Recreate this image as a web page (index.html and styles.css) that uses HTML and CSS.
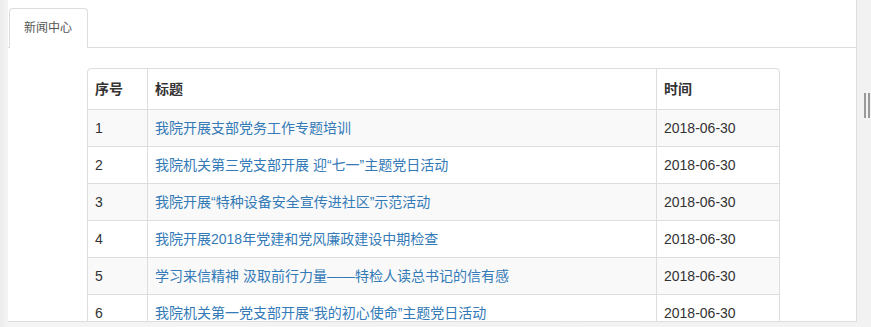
FILE: index.html
```html
<!DOCTYPE html>
<html lang="zh">
<head>
<meta charset="utf-8">
<link rel="stylesheet" href="styles.css">
</head>
<body>
<div class="page">
  <div class="panel">
    <div class="tabs">
      <div class="tab">新闻中心</div>
    </div>
    <div class="content">
      <div class="table-wrap">
        <table class="news">
          <thead>
            <tr><th class="c-no">序号</th><th class="c-title">标题</th><th class="c-time">时间</th></tr>
          </thead>
          <tbody>
            <tr><td>1</td><td><a>我院开展支部党务工作专题培训</a></td><td>2018-06-30</td></tr>
            <tr><td>2</td><td><a>我院机关第三党支部开展 迎“七一”主题党日活动</a></td><td>2018-06-30</td></tr>
            <tr><td>3</td><td><a>我院开展“特种设备安全宣传进社区”示范活动</a></td><td>2018-06-30</td></tr>
            <tr><td>4</td><td><a>我院开展2018年党建和党风廉政建设中期检查</a></td><td>2018-06-30</td></tr>
            <tr><td>5</td><td><a>学习来信精神 汲取前行力量——特检人读总书记的信有感</a></td><td>2018-06-30</td></tr>
            <tr><td>6</td><td><a>我院机关第一党支部开展“我的初心使命”主题党日活动</a></td><td>2018-06-30</td></tr>
          </tbody>
        </table>
      </div>
    </div>
  </div>
  <div class="side">
    <div class="grip"><span></span><span></span></div>
  </div>
</div>
</body>
</html>
```
FILE: styles.css
```css
html, body {
  margin: 0;
  padding: 0;
  background: #f2f2f2;
  overflow: hidden;
}
body {
  font-family: "Liberation Sans", Arial, "Noto Sans CJK SC", sans-serif;
  font-size: 14px;
  color: #333;
}
.page {
  display: flex;
  height: 327px;
  padding-left: 8px;
  background: linear-gradient(to right, #ececec 0, #f4f4f4 8px, #f2f2f2 100%);
}
.panel {
  width: 849px;
  height: 322px;
  background: #fff;
  border-right: 1px solid #dedede;
  border-bottom: 1px solid #dedede;
  box-sizing: border-box;
  overflow: hidden;
  flex: none;
}
.tabs {
  height: 39px;
  padding-top: 8px;
  padding-left: 1px;
  border-bottom: 1px solid #ddd;
  display: flex;
  align-items: flex-end;
}
.tab {
  width: 79px;
  height: 40px;
  box-sizing: border-box;
  border: 1px solid #ddd;
  border-bottom: none;
  border-radius: 4px 4px 0 0;
  background: #fff;
  margin-bottom: -1px;
  padding-left: 14px;
  line-height: 38px;
  color: #555;
  font-size: 12px;
}
.content {
  padding: 20px 0 0 79px;
}
.table-wrap {
  width: 693px;
  border: 1px solid #ddd;
  border-radius: 4px;
  overflow: hidden;
  box-sizing: border-box;
}
.news {
  width: 100%;
  border-collapse: collapse;
}
.news th, .news td {
  text-align: left;
  padding: 8px 7px;
  line-height: 20px;
  border-left: 1px solid #ddd;
  border-top: 1px solid #ddd;
  white-space: nowrap;
}
.news th:first-child, .news td:first-child {
  border-left: none;
}
.news thead th {
  border-top: none;
  padding: 10px 7px 10px;
  font-weight: bold;
  color: #333;
}
.news tbody tr:nth-child(odd) {
  background: #f9f9f9;
}
.c-no { width: 45px; }
.c-time { width: 108px; }
.news a {
  color: #337ab7;
  text-decoration: none;
}
.side {
  flex: 1;
  position: relative;
}
.grip {
  position: absolute;
  left: 7px;
  top: 93px;
  display: flex;
  gap: 2px;
}
.grip span {
  display: block;
  width: 2px;
  height: 25px;
  background: #9a9a9a;
}
```
